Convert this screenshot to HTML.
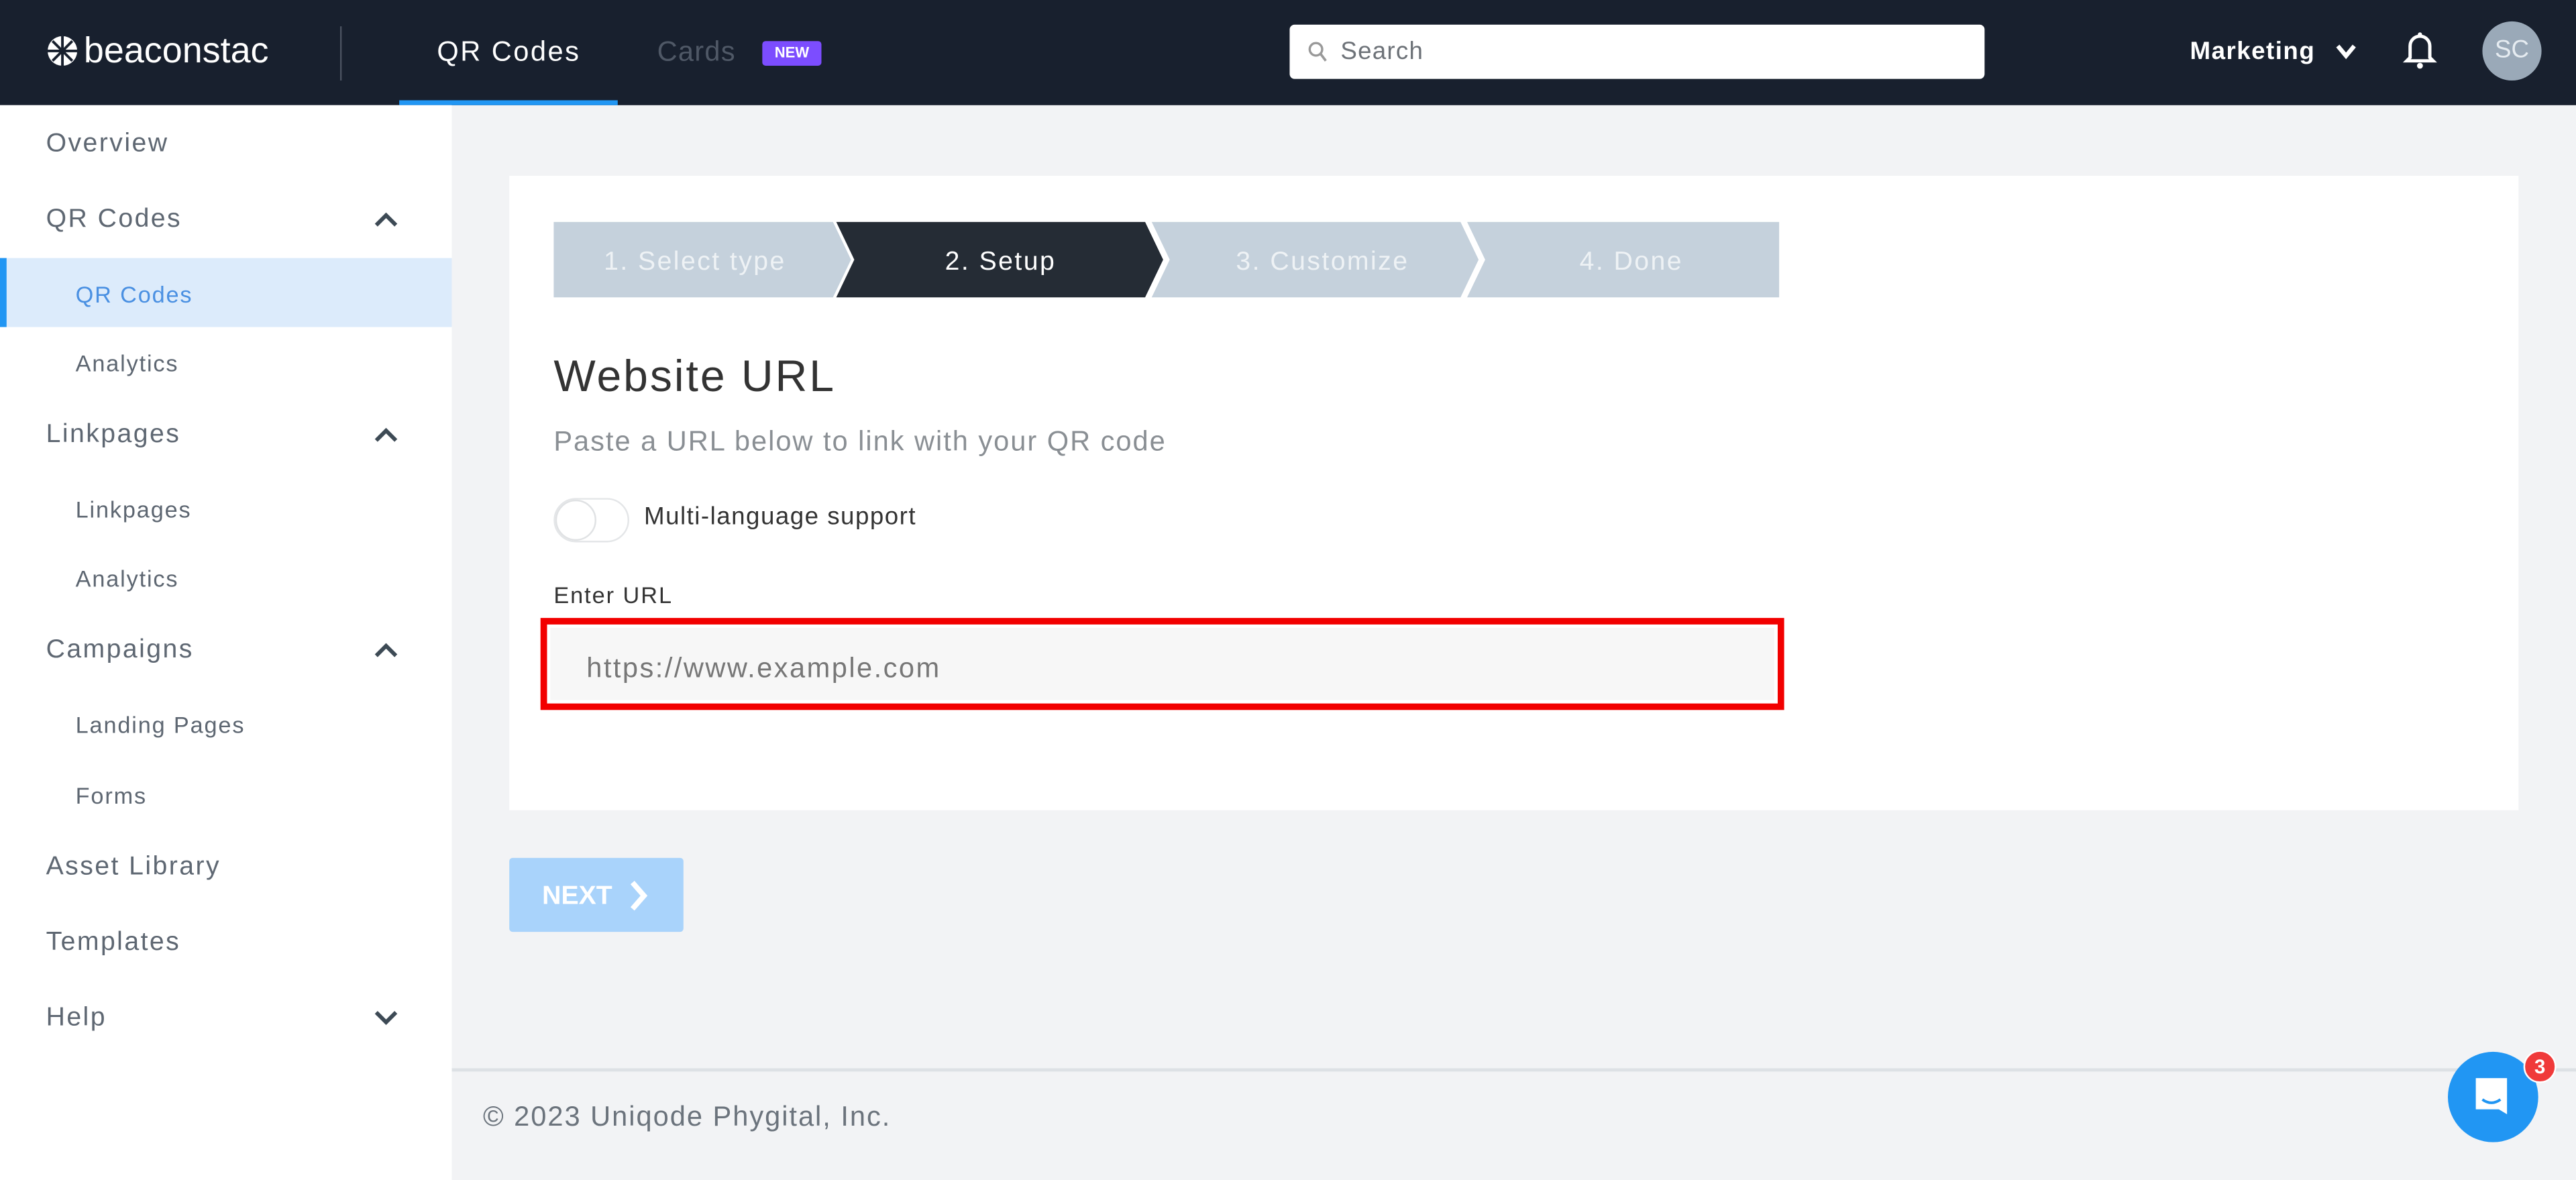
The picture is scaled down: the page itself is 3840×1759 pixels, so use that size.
<!DOCTYPE html>
<html><head><meta charset="utf-8"><style>
*{margin:0;padding:0;box-sizing:border-box}
html,body{width:3840px;height:1759px;overflow:hidden;background:#f2f3f5}
#w{position:absolute;left:0;top:0;width:1568px;height:718px;transform:scale(2.449,2.4499);transform-origin:0 0;font-family:"Liberation Sans",sans-serif;background:#f2f3f5}
.a{position:absolute;white-space:nowrap}
.side{position:absolute;left:0;top:64px;width:275px;height:654px;background:#fff}
.si{position:absolute;left:28px;font-size:16px;color:#5e6772;letter-spacing:1px}
.ss{position:absolute;left:46px;font-size:14px;color:#5e6772;letter-spacing:.75px}
.chev{position:absolute;left:228px;width:14px;height:10px}
</style></head><body><div id="w">
<!-- header -->
<div class="a" style="left:0;top:0;width:1568px;height:64px;background:#18202e"></div>
<svg class="a" style="left:28px;top:20px" width="20" height="22" viewBox="0 0 20 22"><circle cx="10" cy="11" r="9" fill="#fff"/><path d="M10 2v18M1 11h18M4 5l12 12M16 5L4 17" stroke="#18202e" stroke-width="1.6"/></svg>
<div class="a" style="left:51px;top:18px;font-size:22px;color:#fff;letter-spacing:0px">beaconstac</div>
<div class="a" style="left:207px;top:16px;width:1px;height:33px;background:#4a5260"></div>
<div class="a" style="left:266px;top:22px;font-size:17px;color:#fff;letter-spacing:1px">QR Codes</div>
<div class="a" style="left:243px;top:61px;width:133px;height:3px;background:#2196f3"></div>
<div class="a" style="left:400px;top:22px;font-size:17px;color:#4f5866;letter-spacing:.5px">Cards</div>
<div class="a" style="left:464px;top:25px;width:36px;height:15px;background:#7c4dff;border-radius:2px;color:#fff;font-size:9px;font-weight:bold;text-align:center;line-height:15px">NEW</div>
<div class="a" style="left:785px;top:15px;width:423px;height:33px;background:#fff;border-radius:3px"></div>
<svg class="a" style="left:796px;top:25px" width="12" height="13" viewBox="0 0 12 13"><circle cx="5" cy="5" r="3.8" fill="none" stroke="#999" stroke-width="1.4"/><path d="M8 8l3 4" stroke="#999" stroke-width="1.5"/></svg>
<div class="a" style="left:816px;top:23px;font-size:15px;color:#6d7278;letter-spacing:.5px">Search</div>
<div class="a" style="left:1333px;top:23px;font-size:15px;color:#fff;font-weight:bold;letter-spacing:.6px">Marketing</div>
<svg class="a" style="left:1421px;top:26px" width="14" height="11" viewBox="0 0 14 11"><path d="M2 2l5 6 5-6" fill="none" stroke="#fff" stroke-width="2.6"/></svg>
<svg class="a" style="left:1462px;top:17px" width="22" height="26" viewBox="0 0 22 26"><path d="M5 18V11a6 6 0 0112 0v7l2 2H3z" fill="none" stroke="#fff" stroke-width="2"/><circle cx="11" cy="23" r="1.8" fill="#fff"/><circle cx="11" cy="4" r="1.3" fill="#fff"/></svg>
<div class="a" style="left:1511px;top:13px;width:36px;height:36px;border-radius:50%;background:#9aa9b8;color:#e6ecf1;font-size:15px;text-align:center;line-height:36px">SC</div>
<!-- sidebar -->
<div class="side">
<div class="si" style="top:15px">Overview</div>
<div class="si" style="top:61px">QR Codes</div>
<svg class="chev" style="top:65px" viewBox="0 0 14 10"><path d="M1 8l6-6 6 6" fill="none" stroke="#3d4a55" stroke-width="2.4"/></svg>
<div class="a" style="left:0;top:93px;width:275px;height:42px;background:#dcebfb"></div>
<div class="a" style="left:0;top:93px;width:4px;height:42px;background:#2196f3"></div>
<div class="ss" style="top:107px;color:#4a90e2">QR Codes</div>
<div class="ss" style="top:149px">Analytics</div>
<div class="si" style="top:192px">Linkpages</div>
<svg class="chev" style="top:196px" viewBox="0 0 14 10"><path d="M1 8l6-6 6 6" fill="none" stroke="#3d4a55" stroke-width="2.4"/></svg>
<div class="ss" style="top:238px">Linkpages</div>
<div class="ss" style="top:280px">Analytics</div>
<div class="si" style="top:323px">Campaigns</div>
<svg class="chev" style="top:327px" viewBox="0 0 14 10"><path d="M1 8l6-6 6 6" fill="none" stroke="#3d4a55" stroke-width="2.4"/></svg>
<div class="ss" style="top:369px">Landing Pages</div>
<div class="ss" style="top:412px">Forms</div>
<div class="si" style="top:455px">Asset Library</div>
<div class="si" style="top:501px">Templates</div>
<div class="si" style="top:547px">Help</div>
<svg class="chev" style="top:550px" viewBox="0 0 14 10"><path d="M1 2l6 6 6-6" fill="none" stroke="#3d4a55" stroke-width="2.4"/></svg>
</div>
<!-- card -->
<div class="a" style="left:310px;top:107px;width:1223px;height:386px;background:#fff"></div>
<svg class="a" style="left:337px;top:135px" width="746" height="46" viewBox="0 0 746 46">
<polygon points="0,0 170,0 181,23 170,46 0,46" fill="#c5d1dc"/>
<polygon points="172,0 360,0 371,23 360,46 172,46 183,23" fill="#252c35"/>
<polygon points="364,0 552,0 563,23 552,46 364,46 375,23" fill="#c5d1dc"/>
<polygon points="556,0 746,0 746,46 556,46 567,23" fill="#c5d1dc"/>
<g font-family="Liberation Sans,sans-serif" font-size="16" text-anchor="middle" letter-spacing="1">
<text x="86" y="29" fill="#eef2f5">1. Select type</text>
<text x="272" y="29" fill="#fff">2. Setup</text>
<text x="468" y="29" fill="#eef2f5">3. Customize</text>
<text x="656" y="29" fill="#eef2f5">4. Done</text></g></svg>
<div class="a" style="left:337px;top:214px;font-size:27px;color:#333;letter-spacing:1.2px">Website URL</div>
<div class="a" style="left:337px;top:259px;font-size:17px;color:#8a8f94;letter-spacing:.8px">Paste a URL below to link with your QR code</div>
<div class="a" style="left:337px;top:303px;width:46px;height:27px;border:1px solid #e4e6e8;border-radius:14px;background:#fff"></div>
<div class="a" style="left:338px;top:304px;width:25px;height:25px;border:1px solid #e0e2e4;border-radius:50%;background:#fff"></div>
<div class="a" style="left:392px;top:306px;font-size:15px;color:#333;letter-spacing:.6px">Multi-language support</div>
<div class="a" style="left:337px;top:354px;font-size:14px;color:#333;letter-spacing:.8px">Enter URL</div>
<div class="a" style="left:329px;top:376px;width:757px;height:56px;border:4px solid #f20000"></div>
<div class="a" style="left:333px;top:380px;width:749px;height:48px;background:#f7f7f7;border:2px solid #fff"></div>
<div class="a" style="left:357px;top:397px;font-size:17px;color:#777;letter-spacing:1px">https://www.example.com</div>
<!-- next -->
<div class="a" style="left:310px;top:522px;width:106px;height:45px;background:#a9d3fb;border-radius:2px"></div>
<div class="a" style="left:330px;top:537px;font-size:16px;color:#fff;font-weight:bold">NEXT</div>
<svg class="a" style="left:382px;top:535px" width="14" height="20" viewBox="0 0 14 20"><path d="M3 2l7 8-7 8" fill="none" stroke="#fff" stroke-width="3.2"/></svg>
<!-- footer -->
<div class="a" style="left:275px;top:650px;width:1293px;height:2px;background:#dde1e5"></div>
<div class="a" style="left:294px;top:670px;font-size:17px;color:#6b737c;letter-spacing:.8px">© 2023 Uniqode Phygital, Inc.</div>
<div class="a" style="left:1490px;top:640px;width:55px;height:55px;border-radius:50%;background:#2196f3"></div>
<svg class="a" style="left:1506px;top:654px" width="24" height="28" viewBox="0 0 24 28"><path d="M1 2h19v22l-5-3H1z" fill="#fff"/><path d="M5 15q5.5 4 11 0" fill="none" stroke="#2196f3" stroke-width="1.6"/></svg>
<div class="a" style="left:1536px;top:639px;width:20px;height:20px;border-radius:50%;background:#f03a3a;border:1px solid #fff;color:#fff;font-size:12px;font-weight:bold;text-align:center;line-height:18px">3</div>
</div></body></html>
